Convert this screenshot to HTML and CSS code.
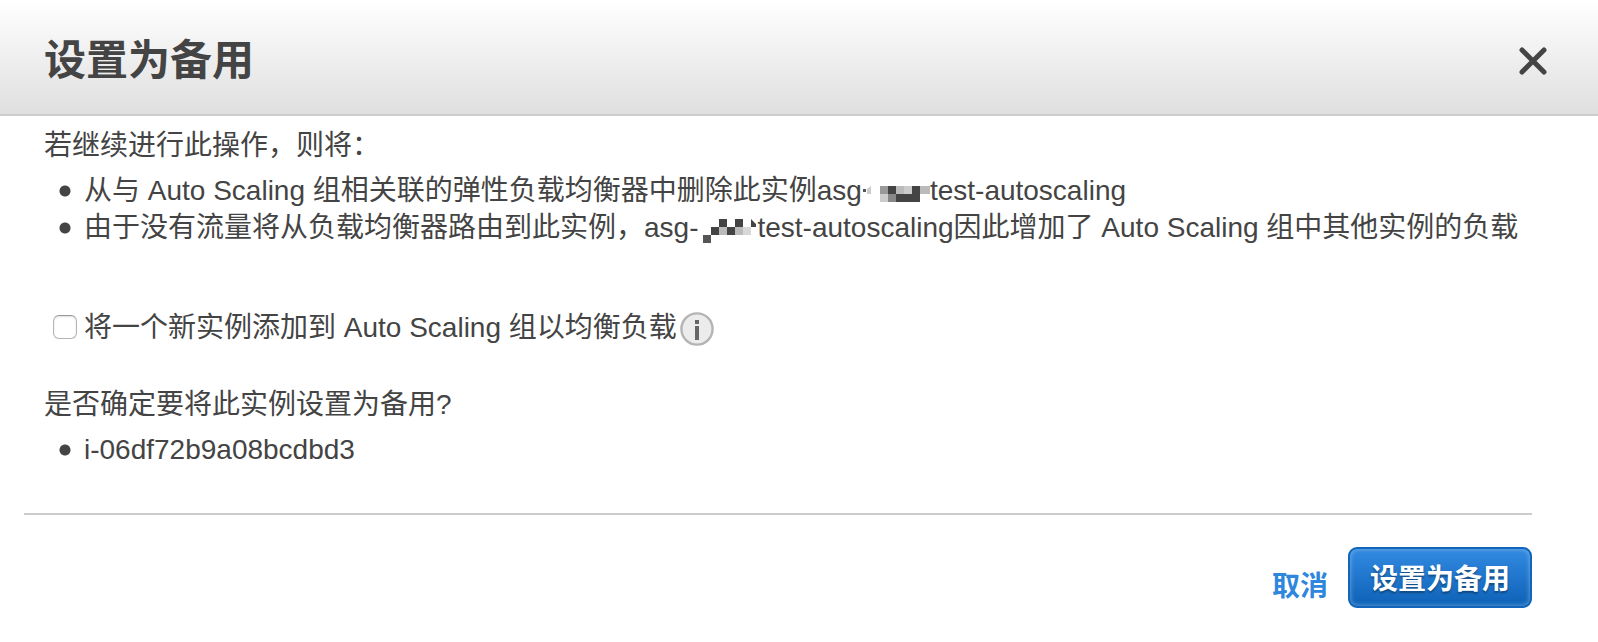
FILE: index.html
```html
<!DOCTYPE html>
<html lang="zh-CN">
<head>
<meta charset="utf-8">
<title>设置为备用</title>
<link rel="stylesheet" href="styles.css">
</head>
<body>
<main class="dialog" role="dialog" aria-labelledby="dialog-title">
  <header class="dialog-header">
    <h1 class="dialog-title" id="dialog-title">设置为备用</h1>
    <button class="close-button" type="button" aria-label="关闭">
      <svg class="close-icon" viewBox="0 0 28 28" aria-hidden="true"><path d="M3 3 25 25M25 3 3 25"/></svg>
    </button>
  </header>
  <div class="dialog-body">
    <p class="lead">若继续进行此操作，则将：</p>
    <ul class="list">
      <li>从与 Auto Scaling 组相关联的弹性负载均衡器中删除此实例asg<svg class="redaction redaction-wide" viewBox="0 0 68 24" aria-hidden="true"><path fill="#555" d="M1 3h3v3H1z"/><path fill="#ccc" d="M5 3l4-3v8H5z"/><path fill="#999" d="M18 0h8v8h-8z"/><path fill="#444" d="M26 0h8v8h-8zM50 0h8v8h-8zM34 8h24v8H34z"/><path fill="#bbb" d="M34 0h8v8h-8zM58 0h10v8H58z"/><path fill="#ccc" d="M42 0h8v8h-8zM18 8h8v8h-8z"/><path fill="#888" d="M26 8h8v8h-8z"/></svg>test-autoscaling</li>
      <li>由于没有流量将从负载均衡器路由到此实例，asg-<svg class="redaction" viewBox="0 0 59 24" aria-hidden="true"><path fill="#444" d="M21 0h8v8h-8zM37 0h8v8h-8zM13 8h8v8h-8zM29 8h8v8h-8zM53 0l5 5v3h-5z"/><path fill="#555" d="M5 16h8v8H5z"/><path fill="#bbb" d="M21 8h8v8h-8zM37 8h8v8h-8z"/><path fill="#d8d8d8" d="M45 8h8v8h-8z"/></svg>test-autoscaling因此增加了 Auto Scaling 组中其他实例的负载</li>
    </ul>
    <div class="option">
      <input class="checkbox" type="checkbox" id="add-instance">
      <label for="add-instance">将一个新实例添加到 Auto Scaling 组以均衡负载</label>
      <button class="info-button" type="button" aria-label="信息">
        <svg class="info-icon" viewBox="0 0 34 34" aria-hidden="true"><circle cx="17" cy="17" r="15.6" fill="#ececec" stroke="#b4b4b4" stroke-width="2.4"/><path fill="#666" d="M15 8h4v4h-4zM15 14h4v14h-4z"/></svg>
      </button>
    </div>
    <p class="lead">是否确定要将此实例设置为备用?</p>
    <ul class="list">
      <li>i-06df72b9a08bcdbd3</li>
    </ul>
  </div>
  <footer class="dialog-footer">
    <a class="cancel" href="#">取消</a>
    <button class="primary" type="button">设置为备用</button>
  </footer>
</main>
</body>
</html>
```
FILE: styles.css
```css
* {
  box-sizing: border-box;
}

body {
  margin: 0;
  background: #fff;
  color: #444;
  font: 28px/37px "Liberation Sans", "Noto Sans CJK SC", sans-serif;
}

button {
  border: 0;
  padding: 0;
  background: none;
  font: inherit;
  cursor: pointer;
}

.dialog-header {
  display: flex;
  align-items: center;
  justify-content: space-between;
  padding: 30px 50px 22px 44px;
  border-bottom: 2px solid #ccc;
  background: linear-gradient(#fff, #dfdfdf);
}

.dialog-title {
  margin: 0;
  font-size: 42px;
  line-height: 62px;
}

.close-button {
  display: flex;
  padding: 1px;
}

.close-icon {
  width: 28px;
  height: 28px;
  fill: none;
  stroke: #444;
  stroke-width: 5;
  stroke-linecap: round;
}

.dialog-body {
  padding: 11px 44px 0;
}

.lead {
  margin: 0 0 8px;
}

.list {
  margin: 0;
  padding: 0;
  list-style: none;
}

.list li {
  display: flow-root;
  padding-left: 40px;
  background: radial-gradient(circle at 21px 19px, #444 5px, transparent 6px);
}

.redaction {
  width: 59px;
  height: 24px;
  margin-bottom: -6px;
  vertical-align: baseline;
}

.redaction-wide {
  width: 68px;
  margin-bottom: -10px;
}

.option {
  display: flex;
  align-items: center;
  margin: 62px 0 40px 9px;
}

.checkbox {
  appearance: none;
  width: 24px;
  height: 24px;
  margin: 0 7px 0 0;
  border: 1px solid #b4b4b4;
  border-top-color: #999;
  border-radius: 6px;
  background: #fff;
  box-shadow: inset 0 1px 2px #ddd;
}

.checkbox:checked {
  background: #2f86dd;
}

.info-button {
  display: flex;
  margin: 4px 0 0 3px;
}

.info-icon {
  width: 34px;
  height: 34px;
}

.dialog-footer {
  display: flex;
  align-items: center;
  justify-content: flex-end;
  gap: 20px;
  margin: 45px 66px 0 24px;
  padding: 32px 0;
  border-top: 2px solid #ccc;
  font-weight: bold;
}

.cancel {
  margin-top: 18px;
  color: #2f86dd;
  text-decoration: none;
}

.primary {
  padding: 12px 20px 8px;
  border: 2px solid #1166bb;
  border-radius: 9px;
  background: linear-gradient(#2f86dd 10%, #1166bb 90%);
  box-shadow: inset 0 0 5px rgba(255, 255, 255, 0.4);
  color: #fff;
  text-shadow: 0 2px 2px rgba(0, 0, 0, 0.35);
}
```
